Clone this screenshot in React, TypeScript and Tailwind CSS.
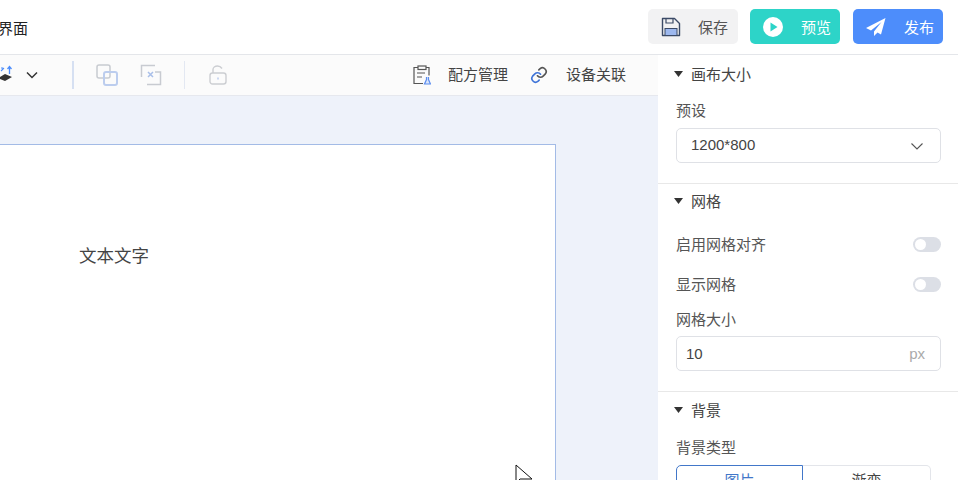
import React from "react";

const Divider = ({ c = "bg-[#d6e0f2]", m = "" }: { c?: string; m?: string }) => (
  <div className={`shrink-0 h-[28px] ${c} ${m}`} />
);

const SectionHead = ({ title, cls }: { title: string; cls: string }) => (
  <div className={`flex items-center h-[20px] pl-[16px] gap-[8px] text-[15px] text-[#444] ${cls}`}>
    <svg width="9" height="6" viewBox="0 0 9 6"><path d="M0 0h9L4.500 6z" fill="#333" /></svg>
    <span className="pt-[2px]">{title}</span>
  </div>
);

const Toggle = () => (
  <div className="w-[28px] h-[15px] rounded-full bg-[#dcdfe6] flex items-center pl-[2px]">
    <div className="w-[11px] h-[11px] rounded-full bg-white" />
  </div>
);

const Label = ({ children, cls = "" }: { children: React.ReactNode; cls?: string }) => (
  <div className={`text-[15px] h-[20px] leading-[22px] text-[#555] ${cls}`}>{children}</div>
);

export default function App() {
  return (
    <div
      className="w-[958px] h-[480px] overflow-hidden bg-white flex flex-col"
      style={{ fontFamily: '"Liberation Sans","Noto Sans CJK SC",sans-serif' }}
    >
      <header className="h-[55px] shrink-0 border-b border-[#e4e6ea] flex items-center justify-between pr-[15px]">
        <span className="text-[15px] text-[#222] -ml-[2px] mt-[4px]">界面</span>
        <div className="flex items-center mt-[-1px] text-[15px]">
          <button className="w-[90px] h-[35px] rounded-[5px] bg-[#f2f2f3] text-[#555] flex items-center pl-[13px]">
            <svg width="20" height="20" viewBox="0 0 20 20" fill="none">
              <path d="M1.500 1.500h12l5 5v12h-17z" stroke="#3b4a66" strokeWidth="1.400" strokeLinejoin="round" />
              <path d="M5 1.500v4.500h7V1.500" stroke="#3b4a66" strokeWidth="1.200" />
              <rect x="4" y="11.500" width="12" height="7" fill="#9db8ee" stroke="#3b4a66" strokeWidth="1" />
            </svg>
            <span className="ml-[17px] pt-[3px]">保存</span>
          </button>
          <button className="ml-[12px] w-[90px] h-[35px] rounded-[5px] bg-[#2dd4c8] text-white flex items-center pl-[13px]">
            <svg width="20" height="20" viewBox="0 0 20 20">
              <circle cx="10" cy="10" r="10" fill="#fff" />
              <path d="M7.500 5.500 14.500 10l-7 4.500z" fill="#2dd4c8" />
            </svg>
            <span className="ml-[18px] pt-[3px]">预览</span>
          </button>
          <button className="ml-[13px] w-[90px] h-[35px] rounded-[5px] bg-[#4d8dfb] text-white flex items-center pl-[13px]">
            <svg width="20" height="20" viewBox="0 0 20 20">
              <path d="M19.500 1 0 11l5 2.500L15.500 5 8 14.500V19l3.500-3.500 3.500 2z" fill="#fff" />
            </svg>
            <span className="ml-[18px] pt-[3px]">发布</span>
          </button>
        </div>
      </header>
      <div className="flex flex-1 min-h-0">
        <main className="w-[658px] shrink-0 flex flex-col min-h-0">
          <div className="h-[41px] shrink-0 bg-[#fbfbfb] border-b border-[#e6e8ee] flex items-center text-[15px] text-[#444]">
            <svg width="13" height="20" viewBox="0 0 13 20" className="shrink-0 -mt-[1px]">
              <path d="M0 12 5 9l7 3-7 4-5-2z" fill="#333" />
              <path d="M9.500 9V2M7.500 4l2-2.500 2 2.500" stroke="#4d8dfb" strokeWidth="1.300" fill="none" />
              <path d="M1 6l3-3M1 3h2" stroke="#4d8dfb" strokeWidth="1.100" fill="none" />
            </svg>
            <svg width="14" height="14" viewBox="0 0 14 14" fill="none" className="ml-[12px]">
              <path d="M2 4.500l5 5 5-5" stroke="#333" strokeWidth="1.500" />
            </svg>
            <Divider m="w-[2px] ml-[33px]" />
            <svg width="23" height="23" viewBox="0 0 23 23" fill="none" className="ml-[22px]">
              <rect x="1" y="1" width="13" height="13" rx="2" stroke="#c8cbd1" strokeWidth="1.500" />
              <rect x="8" y="8" width="13" height="13" rx="2" stroke="#bccdee" strokeWidth="2" />
            </svg>
            <svg width="22" height="22" viewBox="0 0 22 22" fill="none" className="ml-[21px]">
              <path d="M15 1.500H1.500V13" stroke="#c8cbd1" strokeWidth="1.500" />
              <path d="M15 8h5.500v12.500H7" stroke="#c8cbd1" strokeWidth="1.500" />
              <path d="M8 8l5 5M13 8l-5 5" stroke="#a9bfe9" strokeWidth="1.500" />
            </svg>
            <Divider c="bg-[#e3e8f2]" m="w-[1px] ml-[22px]" />
            <svg width="18" height="20" viewBox="0 0 18 20" fill="none" className="ml-[24px]">
              <rect x="1" y="8" width="16" height="11" rx="2.500" stroke="#ccced2" strokeWidth="1.400" />
              <path d="M4 8V4.500C4 2.500 6 1 8.500 1c2 0 3.500 1 4.500 2.500" stroke="#ccced2" strokeWidth="1.400" />
              <path d="M9 12.500v2" stroke="#bccdee" strokeWidth="1.500" />
            </svg>
            <div className="flex items-center ml-auto pr-[32px]">
              <svg width="18" height="20" viewBox="0 0 18 20" fill="none">
                <path d="M5 2.500H1v16h9M13 2.500h3v8" stroke="#555" strokeWidth="1.200" />
                <rect x="5" y="1" width="8" height="3.500" stroke="#555" strokeWidth="1.200" />
                <path d="M4 8h8M4 12h5" stroke="#555" strokeWidth="1.200" />
                <path d="M13.500 12v2.500L11.500 19h6l-2-4.500V12" stroke="#5b8def" strokeWidth="1.200" fill="#dbe6fb" />
              </svg>
              <span className="ml-[17px]">配方管理</span>
              <svg width="18" height="18" viewBox="0 0 24 24" fill="none" className="ml-[22px]">
                <path d="M10 13a5 5 0 0 0 7.500.5l3-3a5 5 0 0 0-7-7l-1.700 1.700" stroke="#555" strokeWidth="2.200" strokeLinecap="round" />
                <path d="M14 11a5 5 0 0 0-7.500-.5l-3 3a5 5 0 0 0 7 7l1.700-1.700" stroke="#3f74d8" strokeWidth="2.200" strokeLinecap="round" />
              </svg>
              <span className="ml-[18px]">设备关联</span>
            </div>
          </div>
          <div className="flex-1 min-h-0 bg-[#eef2fa] pt-[48px] pr-[102px] overflow-hidden">
            <div className="relative h-[400px] bg-white border-t border-r border-[#a3bbe6] pl-[79px] pt-[98px] text-[17.5px] leading-[26px] text-[#444]">
              文本文字
              <svg width="18" height="18" viewBox="0 0 18 18" className="absolute left-[515px] top-[319px]">
                <path d="M1 1v18l4-4h12z" fill="#fff" stroke="#111" strokeWidth="1" />
              </svg>
            </div>
          </div>
        </main>
        <aside className="flex-1 min-w-0 overflow-hidden">
          <SectionHead title="画布大小" cls="mt-[9px]" />
          <div className="pl-[18px] pr-[17px] pt-[16px] pb-[20px] border-b border-[#e8e8e8]">
            <Label>预设</Label>
            <div className="mt-[8px] h-[35px] border border-[#dfe1e6] rounded-[5px] flex items-center justify-between pl-[14px] pr-[16px] text-[15px] text-[#444]">
              <span>1200*800</span>
              <svg width="14" height="14" viewBox="0 0 14 14" fill="none">
                <path d="M1.500 4.500 7 10l5.500-5.500" stroke="#555" strokeWidth="1.100" />
              </svg>
            </div>
          </div>
          <SectionHead title="网格" cls="mt-[7px]" />
          <div className="pl-[18px] pr-[17px] pt-[23px] pb-[20px] border-b border-[#e8e8e8]">
            <div className="flex items-center justify-between h-[20px]">
              <Label>启用网格对齐</Label>
              <Toggle />
            </div>
            <div className="flex items-center justify-between h-[20px] mt-[20px]">
              <Label>显示网格</Label>
              <Toggle />
            </div>
            <Label cls="mt-[15px]">网格大小</Label>
            <div className="mt-[7px] h-[35px] border border-[#dfe1e6] rounded-[5px] flex items-center justify-between pl-[9px] pr-[15px] pt-[2px] text-[15px] text-[#444]">
              <span>10</span>
              <span className="text-[#aaa]">px</span>
            </div>
          </div>
          <SectionHead title="背景" cls="mt-[8px]" />
          <div className="px-[18px] pt-[17px]">
            <Label>背景类型</Label>
            <div className="mt-[8px] flex w-[255px] h-[35px] text-[15px] leading-[30px] text-center">
              <div className="w-[127px] border border-[#4277c9] rounded-l-[5px] text-[#4277c9]">图片</div>
              <div className="flex-1 border border-l-0 border-[#e3e5ea] rounded-r-[5px] text-[#444]">渐变</div>
            </div>
          </div>
        </aside>
      </div>
    </div>
  );
}
